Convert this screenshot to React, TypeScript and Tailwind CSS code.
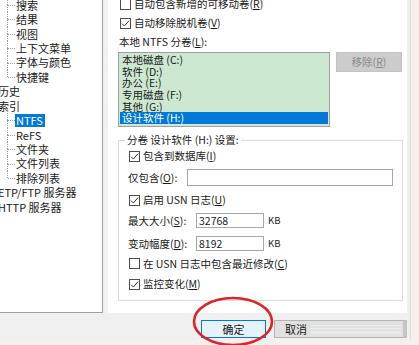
import type { ReactNode } from "react";

type TreeRow = {
  label: string;
  level: 0 | 1;
  last?: boolean;
  selected?: boolean;
};

const tree: TreeRow[] = [
  { label: "搜索", level: 1 },
  { label: "结果", level: 1 },
  { label: "视图", level: 1 },
  { label: "上下文菜单", level: 1 },
  { label: "字体与颜色", level: 1 },
  { label: "快捷键", level: 1, last: true },
  { label: "历史", level: 0 },
  { label: "索引", level: 0 },
  { label: "NTFS", level: 1, selected: true },
  { label: "ReFS", level: 1 },
  { label: "文件夹", level: 1 },
  { label: "文件列表", level: 1 },
  { label: "排除列表", level: 1, last: true },
  { label: "ETP/FTP 服务器", level: 0 },
  { label: "HTTP 服务器", level: 0 },
];

const volumes = ["本地磁盘 (C:)", "软件 (D:)", "办公 (E:)", "专用磁盘 (F:)", "其他 (G:)", "设计软件 (H:)"];

function Acc({ k }: { k: string }) {
  return (
    <>
      (<span className="underline underline-offset-[1px]">{k}</span>)
    </>
  );
}

function Box({ checked }: { checked?: boolean }) {
  return (
    <span className="flex h-[11px] w-[11px] shrink-0 items-center justify-center border border-[#4d4d4d] bg-white">
      {checked && (
        <svg width="9" height="9" viewBox="0 0 9 9" fill="none">
          <path d="M1 4.6 L3.4 7 L8 1.6" stroke="#333" strokeWidth="1" />
        </svg>
      )}
    </span>
  );
}

function Check({ checked, children, className = "" }: { checked?: boolean; children: ReactNode; className?: string }) {
  return (
    <div className={`flex items-center gap-[3px] ${className}`}>
      <Box checked={checked} />
      <span className="whitespace-nowrap">{children}</span>
    </div>
  );
}

function TreeItem({ row }: { row: TreeRow }) {
  if (row.level === 0) {
    return (
      <div className="flex h-[14.43px] items-center">
        <span className="-ml-[2px] whitespace-nowrap">{row.label}</span>
      </div>
    );
  }
  return (
    <div className="flex h-[14.43px] items-center">
      <span className="w-[7px] shrink-0" />
      <span className="relative h-full w-[8px] shrink-0">
        <span className="absolute left-0 top-0 h-1/2 border-l border-dotted border-[#9a9a9a]" />
        {!row.last && <span className="absolute bottom-0 left-0 h-1/2 border-l border-dotted border-[#9a9a9a]" />}
        <span className="absolute left-[1px] top-1/2 w-[7px] border-t border-dotted border-[#9a9a9a]" />
      </span>
      <span
        className={`whitespace-nowrap pl-[1px] pr-[2px] ${
          row.selected ? "bg-[#0078d7] leading-[13px] text-white" : ""
        }`}
      >
        {row.label}
      </span>
    </div>
  );
}

function Field({ value, width }: { value?: string; width: string }) {
  return (
    <div className={`flex items-center border border-[#a8a8a8] bg-white pl-[2px] ${width}`}>
      {value}
    </div>
  );
}

export default function App() {
  return (
    <div className="relative h-[345px] w-[419px] overflow-hidden bg-[#f7efeb] font-['Noto_Sans_CJK_SC',sans-serif] text-[#1a1a1a]">
      <div className="flex h-[340px] w-[411px] flex-col border-r border-[#dedede] bg-[#f0f0f0]">
        <div className="flex h-[313px]">
          {/* tree */}
          <div className="h-full w-[103px] shrink-0 overflow-hidden border-b border-r border-[#a0a0a0] bg-white text-[11px]">
            <div className="-mt-[2.2px]">
              {tree.map((row) => (
                <TreeItem key={row.label} row={row} />
              ))}
            </div>
          </div>

          {/* settings */}
          <div className="ml-[5px] flex h-full w-[299px] flex-col bg-white pl-[10px] text-[10.5px]">
            <Check className="-mt-[6px] ml-[2px] h-[20px]">
              自动包含新增的可移动卷<Acc k="R" />
            </Check>
            <Check checked className="ml-[2px] h-[18px]">
              自动移除脱机卷<Acc k="V" />
            </Check>
            <div className="ml-[1px] flex h-[20px] items-center">
              本地 NTFS 分卷<Acc k="L" />:
            </div>
            <div className="flex items-start">
              <div className="h-[75px] w-[212px] border border-[#a0a0a0] bg-[#cde8d0] px-[1px] pt-[1.2px]">
                {volumes.map((v, i) => (
                  <div
                    key={v}
                    className={`h-[11.6px] whitespace-nowrap pl-[2px] leading-[11.6px] ${
                      i === volumes.length - 1 ? "bg-[#0078d7] text-white" : ""
                    }`}
                  >
                    {v}
                  </div>
                ))}
              </div>
              <div className="ml-[6px] flex h-[20px] w-[66px] items-center justify-center border border-[#c4c4c4] bg-[#cccccc] text-[#8a8a8a]">
                移除<Acc k="R" />
              </div>
            </div>

            <fieldset className="mt-[5px] w-[285px] border border-[#dcdcdc] pb-[4px] pl-[9px]">
              <legend className="-ml-[3px] px-[2px] leading-[16px]">分卷 设计软件 (H:) 设置:</legend>
              <Check checked className="ml-[1px] h-[16px]">
                包含到数据库<Acc k="I" />
              </Check>
              <div className="flex h-[27px] items-center">
                <span className="w-[59px] whitespace-nowrap">
                  仅包含<Acc k="O" />:
                </span>
                <Field width="h-[17px] w-[206px]" />
              </div>
              <Check checked className="ml-[1px] h-[18px]">
                启用 USN 日志<Acc k="U" />
              </Check>
              <div className="flex h-[23px] items-center">
                <span className="w-[68px] whitespace-nowrap">
                  最大大小<Acc k="S" />:
                </span>
                <Field value="32768" width="h-[15px] w-[68px]" />
                <span className="ml-[4px] text-[9.5px]">KB</span>
              </div>
              <div className="flex h-[23px] items-center">
                <span className="w-[68px] whitespace-nowrap">
                  变动幅度<Acc k="D" />:
                </span>
                <Field value="8192" width="h-[15px] w-[68px]" />
                <span className="ml-[4px] text-[9.5px]">KB</span>
              </div>
              <Check className="ml-[1px] h-[17px]">
                在 USN 日志中包含最近修改<Acc k="C" />
              </Check>
              <Check checked className="ml-[1px] h-[24px]">
                监控变化<Acc k="M" />
              </Check>
            </fieldset>
          </div>
        </div>

        {/* buttons */}
        <div className="flex justify-end gap-[8px] pr-[3px] pt-[7px] text-[11px]">
          <div className="flex h-[18px] w-[65px] items-center justify-center border border-[#0078d7] bg-[#e5f1fb]">
            确定
          </div>
          <div className="flex h-[18px] w-[133px] items-center border border-[#b4b4b4] border-r-[4px] border-r-[#c6c6c6] bg-[#e1e1e1] pl-[10px]">
            <span>取消</span>
            <div className="ml-[4px] flex flex-1 flex-col gap-[2px] pr-[2px]">
              <span className="h-px bg-[#ececec]" />
              <span className="h-px bg-[#ececec]" />
              <span className="h-[3px] bg-[#ebebeb]" />
            </div>
          </div>
        </div>
      </div>

      <svg className="pointer-events-none absolute left-0 top-0" width="419" height="345" viewBox="0 0 419 345">
        <ellipse cx="233" cy="321.5" rx="39" ry="23.5" fill="none" stroke="#d8262c" strokeWidth="2.6" />
      </svg>
    </div>
  );
}
